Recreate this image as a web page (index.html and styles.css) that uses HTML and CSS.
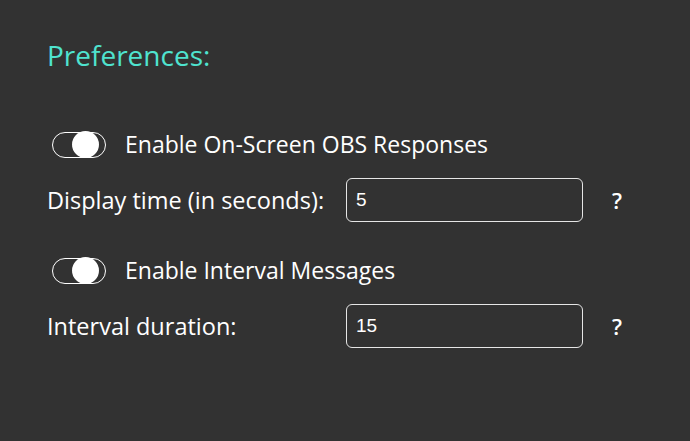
FILE: index.html
```html
<!DOCTYPE html>
<html>
<head>
<meta charset="utf-8">
<link rel="stylesheet" href="styles.css">
</head>
<body>
<div class="prefs">
  <h2 class="title">Preferences:</h2>
  <div class="group">
    <div class="toggle-row">
      <span class="toggle"><span class="knob"></span></span>
      <span class="toggle-label">Enable On-Screen OBS Responses</span>
    </div>
    <div class="field-row">
      <label class="field-label">Display time (in seconds):</label>
      <input class="field-input" type="text" value="5">
      <span class="help">?</span>
    </div>
  </div>
  <div class="group">
    <div class="toggle-row">
      <span class="toggle"><span class="knob"></span></span>
      <span class="toggle-label">Enable Interval Messages</span>
    </div>
    <div class="field-row">
      <label class="field-label">Interval duration:</label>
      <input class="field-input" type="text" value="15">
      <span class="help">?</span>
    </div>
  </div>
</div>
</body>
</html>
```
FILE: styles.css
```css
html, body {
  margin: 0;
  padding: 0;
  background: #323232;
  height: 100%;
}
.prefs {
  padding: 38px 0 0 47px;
  font-family: "Open Sans", sans-serif;
  color: #ffffff;
}
.title {
  margin: 0;
  font-size: 28px;
  line-height: 34px;
  font-weight: 400;
  color: #4fe3cf;
}
.group {
  display: flex;
  flex-direction: column;
}
.group:first-of-type {
  margin-top: 59px;
}
.toggle-row {
  display: flex;
  align-items: center;
  height: 27px;
  padding-left: 5px;
  gap: 19px;
}
.toggle {
  position: relative;
  box-sizing: border-box;
  width: 54px;
  height: 26px;
  border: 1.5px solid #ffffff;
  border-radius: 13px;
}
.knob {
  position: absolute;
  left: 19px;
  top: -1.5px;
  width: 27px;
  height: 27px;
  border-radius: 50%;
  background: #ffffff;
}
.toggle-label {
  font-size: 23px;
  line-height: 27px;
  font-weight: 500;
}
.field-row {
  display: grid;
  grid-template-columns: 299px 237px auto;
  align-items: center;
  margin-top: 20px;
}
.field-label {
  font-size: 23.5px;
  font-weight: 500;
}
.field-input {
  box-sizing: border-box;
  width: 237px;
  height: 44px;
  margin: 0;
  padding: 0 9px;
  background: transparent;
  border: 1px solid #e6e6e6;
  border-radius: 6px;
  color: #ffffff;
  font-family: "Liberation Sans", Arial, sans-serif;
  font-size: 19px;
  outline: none;
}
.help {
  padding-left: 29px;
  font-size: 22px;
  font-weight: 600;
}
.group + .group {
  margin-top: 35px;
}
```
